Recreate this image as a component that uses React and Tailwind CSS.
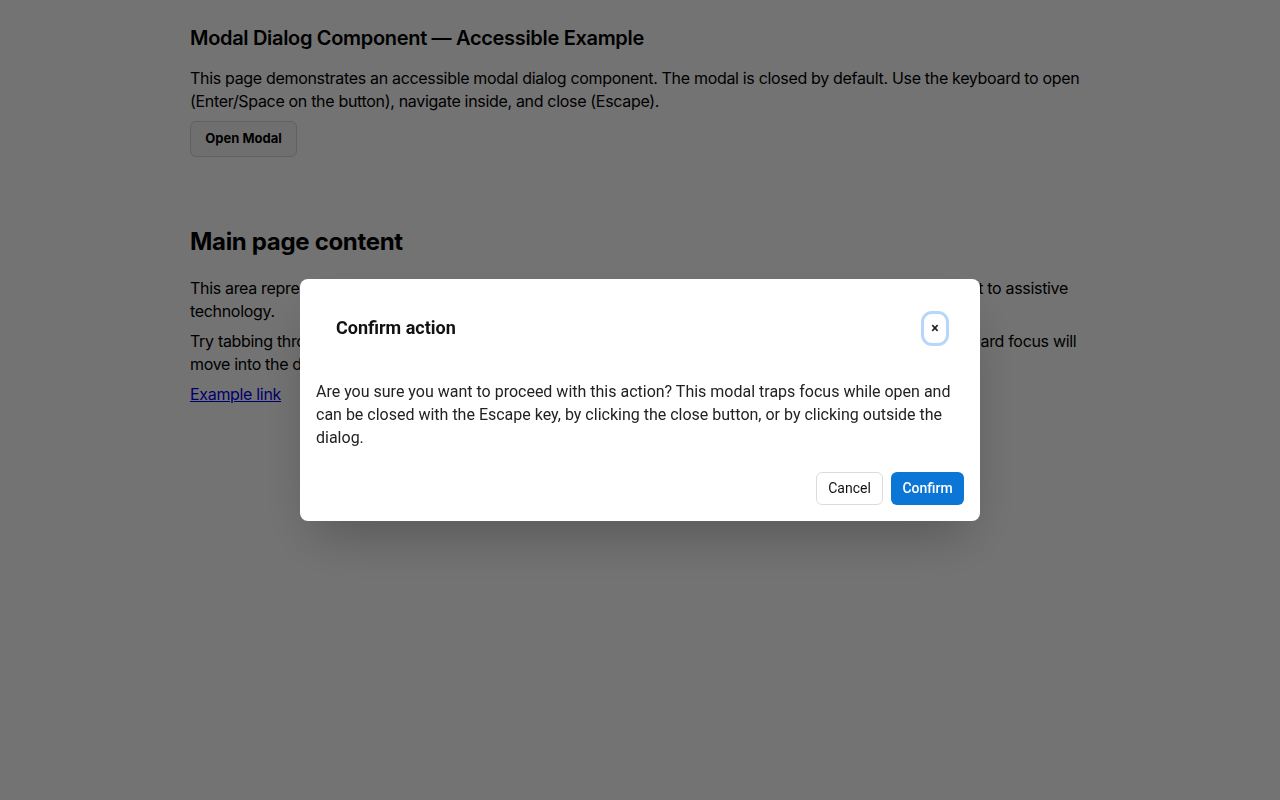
import React, { useState } from 'react';

const font = { fontFamily: 'Inter, "Noto Sans", sans-serif' };
const modalFont = { fontFamily: 'Roboto, "Liberation Sans", sans-serif' };

const App = () => {
  const [open, setOpen] = useState(true);

  return (
    <div className="min-h-screen bg-white text-black tracking-[-0.02em]" style={font}>
      <main className="max-w-[900px] mx-auto pt-6">
        <h1 className="text-[20px] leading-[28px] font-semibold">
          Modal Dialog Component — Accessible Example
        </h1>
        <p className="mt-[15px] text-[16px] leading-[23px]">
          This page demonstrates an accessible modal dialog component. The modal is closed by default. Use the keyboard to open (Enter/Space on the button), navigate inside, and close (Escape).
        </p>
        <button
          onClick={() => setOpen(true)}
          className="mt-2 h-[36px] w-[107px] rounded-md border border-[#d4d4d4] bg-[#f7f7f7] text-[13px] font-bold tracking-normal"
        >
          Open Modal
        </button>

        <section className="mt-[69px]">
          <h2 className="text-[24px] leading-[32px] font-bold">Main page content</h2>
          <p className="mt-[19px] text-[16px] leading-[23px]">
            This area represents the main content of the page. When the modal is open, this content is hidden and is inert to assistive technology.
          </p>
          <p className="mt-[7px] text-[16px] leading-[23px]">
            Try tabbing through this page while the modal is closed, then open the modal again and notice that the keyboard focus will move into the dialog and stay there.
          </p>
          <a href="#" className="mt-[7px] inline-block text-[16px] leading-[23px] text-[#0000ee] underline">
            Example link
          </a>
        </section>
      </main>

      {open && (
        <div className="fixed inset-0 bg-black/55 flex items-center justify-center" onClick={() => setOpen(false)}>
          <div
            role="dialog"
            aria-modal="true"
            className="w-[680px] bg-white rounded-lg p-4 shadow-2xl tracking-normal"
            style={modalFont}
            onClick={(e) => e.stopPropagation()}
          >
            <div className="h-[66px] flex items-center justify-between pl-5 pr-[15px]">
              <h2 className="text-[18px] leading-[24px] font-bold text-[#111]">Confirm action</h2>
              <button
                aria-label="Close"
                onClick={() => setOpen(false)}
                className="w-[28px] h-[35px] rounded-[11px] border-[3px] border-[#b6d6fb] bg-white text-[14px] leading-none font-bold text-[#222] flex items-center justify-center"
              >
                ×
              </button>
            </div>
            <p className="mt-[19px] text-[16px] leading-[23px] text-[#222]">
              Are you sure you want to proceed with this action? This modal traps focus while open and can be closed with the Escape key, by clicking the close button, or by clicking outside the dialog.
            </p>
            <div className="mt-[23px] flex justify-end gap-2">
              <button
                onClick={() => setOpen(false)}
                className="h-[33px] w-[67px] rounded-md border border-[#dcdcdc] bg-white text-[14px] text-[#111]"
              >
                Cancel
              </button>
              <button
                onClick={() => setOpen(false)}
                className="h-[33px] w-[73px] rounded-md bg-[#0b76d6] text-[14px] text-white font-medium"
              >
                Confirm
              </button>
            </div>
          </div>
        </div>
      )}
    </div>
  );
};

export default App;
